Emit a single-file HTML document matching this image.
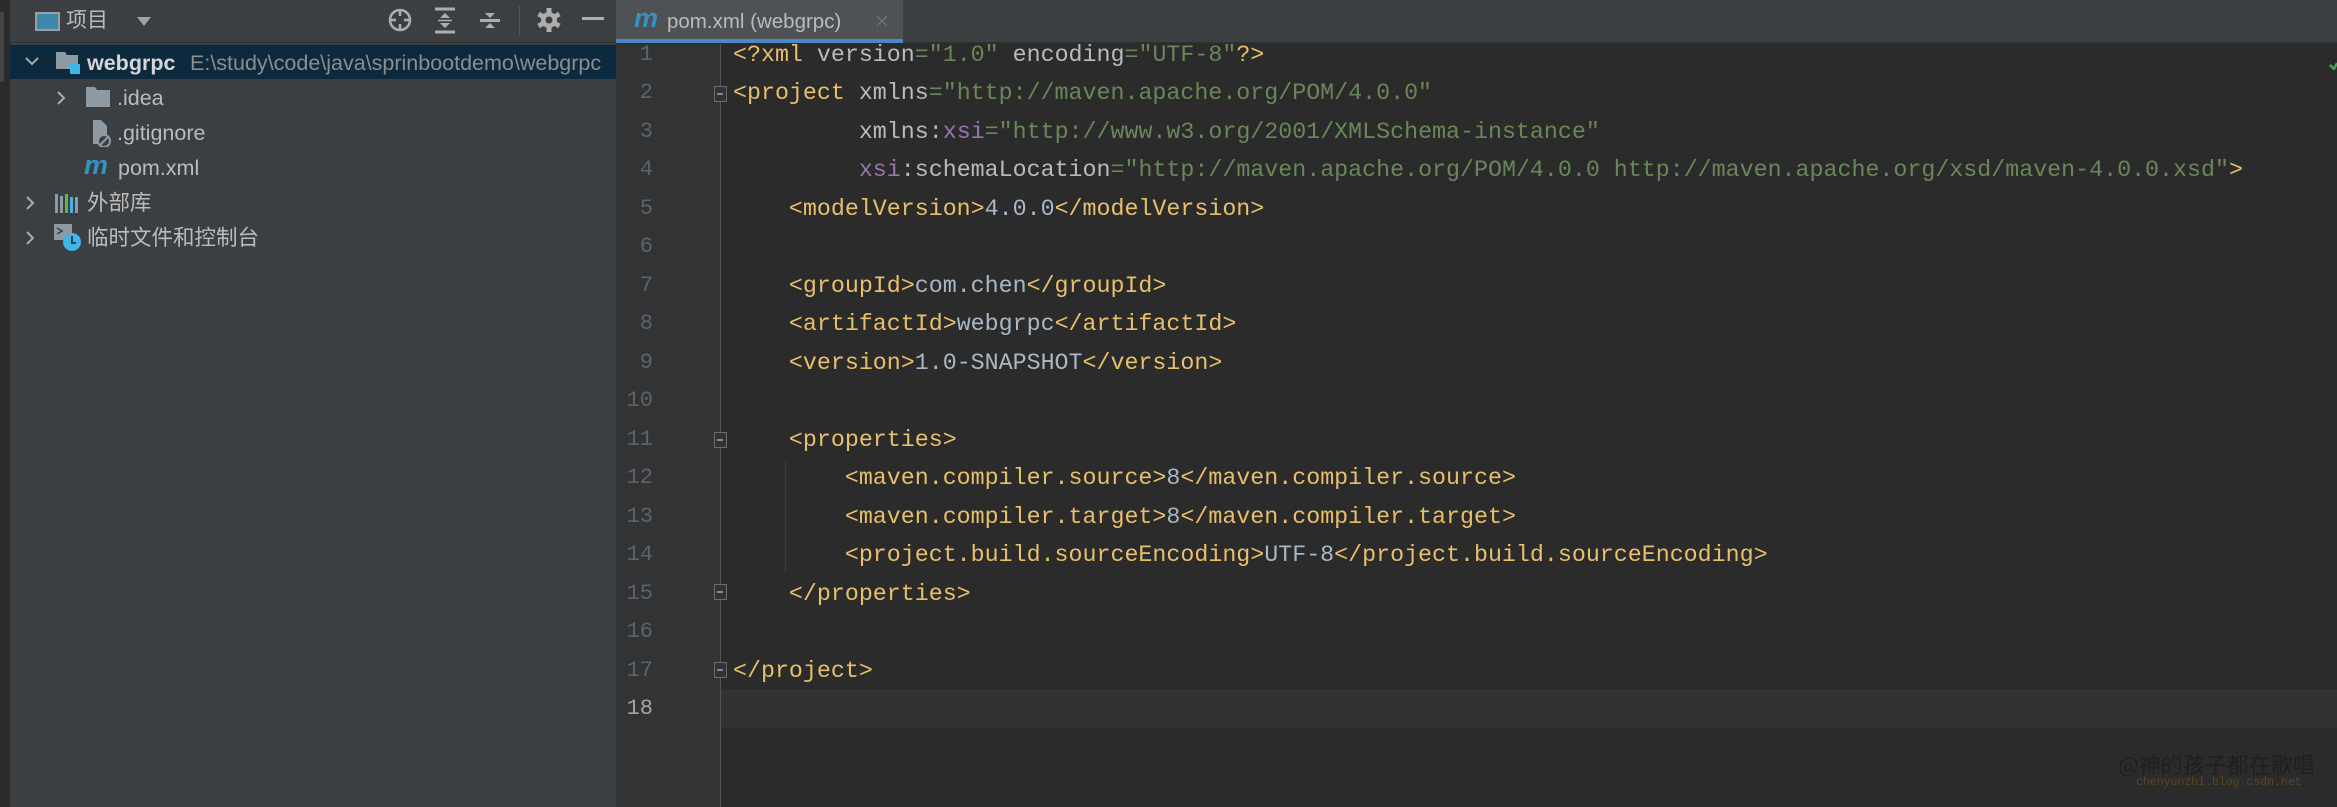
<!DOCTYPE html>
<html><head><meta charset="utf-8"><style>
*{margin:0;padding:0;box-sizing:border-box}
body{width:2337px;height:807px;overflow:hidden;background:#2b2b2b;position:relative;font-family:"Liberation Sans","Noto Sans CJK SC",sans-serif}
.abs{position:absolute}
#strip{left:0;top:0;width:10px;height:807px;background:#2b2b2b}
#panel{left:10px;top:0;width:606px;height:807px;background:#3c3f41}
#phead{left:10px;top:0;width:606px;height:43px;background:#3c3f41;border-bottom:1px solid #323232}
.t{position:absolute;color:#bbbbbb;font-size:21.5px;line-height:24px;white-space:nowrap}
#sel{left:10px;top:45px;width:606px;height:34px;background:#0d293e}
#tabbar{left:616px;top:0;width:1721px;height:43px;background:#3c3f41;border-bottom:1px solid #323232}
#tab{left:616px;top:0;width:287px;height:43px;background:#4e5254}
#tabline{left:616px;top:39px;width:287px;height:4px;background:#4a88c7}
#gutter{left:616px;top:44px;width:105px;height:763px;background:#313335}
#fold{left:720px;top:44px;width:1px;height:763px;background:#555555}
#cur{left:721px;top:689px;width:1616px;height:39px;background:#323232}
.ln{position:absolute;left:616px;width:37px;text-align:right;font-family:"Liberation Mono",monospace;font-size:22px;color:#606366;height:38.5px;line-height:38.5px}
.code{position:absolute;left:733px;font-family:"Liberation Mono",monospace;font-size:23.3px;color:#a9b7c6;white-space:pre;height:38.5px;line-height:38.5px}
.g{color:#e8bf6a}.a{color:#bababa}.s{color:#6a8759}.p{color:#9876aa}.v{color:#a9b7c6}
.fm{position:absolute;left:714px;width:13px;height:16px;border:1.5px solid #6b6b6b;background:#313335}
.fm:after{content:"";position:absolute;left:2px;top:6px;width:6px;height:1.5px;background:#8a8a8a}
</style></head><body>
<div id="strip" class="abs"></div>
<div class="abs" style="left:0;top:12px;width:4px;height:70px;background:#444"></div>
<div id="panel" class="abs"></div>
<div id="phead" class="abs"></div>
<div class="abs" style="left:35px;top:12px;width:25px;height:19px;border:2px solid #9aa0a4;background:#3d87a8"></div>
<div class="t" style="left:66px;top:9px;font-size:21px">项目</div>
<svg class="abs" style="left:136px;top:15px" width="16" height="12"><path d="M1 2h14l-7 9z" fill="#a0a0a0"/></svg>
<svg class="abs" style="left:386px;top:6px" width="28" height="28"><circle cx="14" cy="14" r="10" fill="none" stroke="#adadad" stroke-width="2.5"/><path d="M14 3v7M14 18v7M3 14h7M18 14h7" stroke="#adadad" stroke-width="2.5"/></svg>
<svg class="abs" style="left:433px;top:6px" width="24" height="28"><path d="M2 3h20M2 26h20" stroke="#adadad" stroke-width="3"/><path d="M12 7l-5 5h10zM12 22l-5-5h10z" fill="#adadad"/><path d="M5 14.5h14" stroke="#adadad" stroke-width="1.5"/></svg>
<svg class="abs" style="left:478px;top:6px" width="24" height="28"><path d="M2 14.5h20" stroke="#adadad" stroke-width="3"/><path d="M12 12l-5-5h10zM12 17l-5 5h10z" fill="#adadad"/></svg>
<div class="abs" style="left:519px;top:6px;width:1px;height:30px;background:#555"></div>
<svg class="abs" style="left:536px;top:7px" width="26" height="26"><g transform="translate(13 13)" fill="#adadad"><circle r="8"/><rect x="-2.5" y="-12" width="5" height="24"/><rect x="-2.5" y="-12" width="5" height="24" transform="rotate(60)"/><rect x="-2.5" y="-12" width="5" height="24" transform="rotate(120)"/><circle r="3.5" fill="#3c3f41"/></g></svg>
<div class="abs" style="left:582px;top:17px;width:22px;height:3px;background:#adadad"></div>

<div id="sel" class="abs"></div>
<svg class="abs" style="left:24px;top:54px" width="16" height="16"><path d="M2 4l6 6 6-6" fill="none" stroke="#aaa" stroke-width="2"/></svg>
<svg class="abs" style="left:55px;top:50px" width="26" height="26"><path d="M1 2h9l2 3h11v14H1z" fill="#8e9aa3"/><rect x="15" y="14" width="10" height="10" fill="#3fb5e8"/></svg>
<div class="t" style="left:87px;top:51px;font-weight:bold;color:#d6d6d6">webgrpc</div>
<div class="t" style="left:190px;top:51px;color:#8d8d8d;width:426px;overflow:hidden">E:\study\code\java\sprinbootdemo\webgrpc</div>

<svg class="abs" style="left:55px;top:90px" width="14" height="16"><path d="M3 2l6 6-6 6" fill="none" stroke="#aaa" stroke-width="2"/></svg>
<svg class="abs" style="left:85px;top:86px" width="26" height="22"><path d="M1 1h9l2 3h13v17H1z" fill="#8e9aa3"/></svg>
<div class="t" style="left:117px;top:86px">.idea</div>

<svg class="abs" style="left:88px;top:119px" width="24" height="28"><path d="M5 1h8l6 6v18H5z" fill="#8e9aa3"/><circle cx="16" cy="22" r="6" fill="#3c3f41" stroke="#8e9aa3" stroke-width="2"/><path d="M12 26l8-8" stroke="#8e9aa3" stroke-width="2"/></svg>
<div class="t" style="left:117px;top:121px">.gitignore</div>

<div class="t" style="left:84px;top:153px;font-style:italic;font-weight:bold;color:#3592c4;font-size:27px">m</div>
<div class="t" style="left:118px;top:156px">pom.xml</div>

<svg class="abs" style="left:24px;top:195px" width="14" height="16"><path d="M3 2l6 6-6 6" fill="none" stroke="#aaa" stroke-width="2"/></svg>
<svg class="abs" style="left:54px;top:192px" width="26" height="22"><rect x="1" y="2" width="3" height="19" fill="#8e9aa3"/><rect x="6" y="4" width="3" height="17" fill="#8e9aa3"/><rect x="11" y="2" width="3" height="19" fill="#62b543"/><rect x="16" y="5" width="3" height="16" fill="#3fb5e8"/><rect x="21" y="5" width="3" height="16" fill="#8e9aa3"/></svg>
<div class="t" style="left:87px;top:191px">外部库</div>

<svg class="abs" style="left:24px;top:230px" width="14" height="16"><path d="M3 2l6 6-6 6" fill="none" stroke="#aaa" stroke-width="2"/></svg>
<svg class="abs" style="left:53px;top:223px" width="30" height="30"><rect x="1" y="1" width="18" height="16" fill="#8e9aa3"/><path d="M4 5l5 3-5 3" fill="none" stroke="#3c3f41" stroke-width="1.5"/><circle cx="19" cy="19" r="9" fill="#3fb5e8"/><path d="M19 13v7h4" fill="none" stroke="#3c3f41" stroke-width="2"/></svg>
<div class="t" style="left:87px;top:226px">临时文件和控制台</div>

<div id="tabbar" class="abs"></div>
<div id="tab" class="abs"></div>
<div id="tabline" class="abs"></div>
<div class="t" style="left:634px;top:6px;font-style:italic;font-weight:bold;color:#3592c4;font-size:27px">m</div>
<div class="t" style="left:667px;top:10px;font-size:20.5px">pom.xml (webgrpc)</div>
<svg class="abs" style="left:875px;top:14px" width="14" height="14"><path d="M2 2l10 10M12 2L2 12" stroke="#6e6e6e" stroke-width="1.5"/></svg>

<div id="gutter" class="abs"></div>
<div id="cur" class="abs"></div>
<div id="fold" class="abs"></div>
<div class="abs" style="left:785px;top:460px;width:1px;height:113px;background:#3b3b3b"></div>

<div class="ln" style="top:35.8px">1</div>
<div class="ln" style="top:74.3px">2</div>
<div class="ln" style="top:112.8px">3</div>
<div class="ln" style="top:151.3px">4</div>
<div class="ln" style="top:189.8px">5</div>
<div class="ln" style="top:228.3px">6</div>
<div class="ln" style="top:266.8px">7</div>
<div class="ln" style="top:305.3px">8</div>
<div class="ln" style="top:343.8px">9</div>
<div class="ln" style="top:382.3px">10</div>
<div class="ln" style="top:420.8px">11</div>
<div class="ln" style="top:459.3px">12</div>
<div class="ln" style="top:497.8px">13</div>
<div class="ln" style="top:536.3px">14</div>
<div class="ln" style="top:574.8px">15</div>
<div class="ln" style="top:613.3px">16</div>
<div class="ln" style="top:651.8px">17</div>
<div class="ln" style="top:690.3px;color:#a4a3a3">18</div>

<div class="fm" style="top:86px"></div>
<div class="fm" style="top:432px"></div>
<div class="fm" style="top:584px"></div>
<div class="fm" style="top:662px"></div>

<div class="code" style="top:35.8px"><span class="g">&lt;?xml </span><span class="a">version</span><span class="s">="1.0" </span><span class="a">encoding</span><span class="s">="UTF-8"</span><span class="g">?&gt;</span></div>
<div class="code" style="top:74.3px"><span class="g">&lt;project </span><span class="a">xmlns</span><span class="s">="http://maven.apache.org/POM/4.0.0"</span></div>
<div class="code" style="top:112.8px">         <span class="a">xmlns:</span><span class="p">xsi</span><span class="s">="http://www.w3.org/2001/XMLSchema-instance"</span></div>
<div class="code" style="top:151.3px">         <span class="p">xsi</span><span class="a">:schemaLocation</span><span class="s">="http://maven.apache.org/POM/4.0.0 http://maven.apache.org/xsd/maven-4.0.0.xsd"</span><span class="g">&gt;</span></div>
<div class="code" style="top:189.8px">    <span class="g">&lt;modelVersion&gt;</span>4.0.0<span class="g">&lt;/modelVersion&gt;</span></div>
<div class="code" style="top:266.8px">    <span class="g">&lt;groupId&gt;</span>com.chen<span class="g">&lt;/groupId&gt;</span></div>
<div class="code" style="top:305.3px">    <span class="g">&lt;artifactId&gt;</span>webgrpc<span class="g">&lt;/artifactId&gt;</span></div>
<div class="code" style="top:343.8px">    <span class="g">&lt;version&gt;</span>1.0-SNAPSHOT<span class="g">&lt;/version&gt;</span></div>
<div class="code" style="top:420.8px">    <span class="g">&lt;properties&gt;</span></div>
<div class="code" style="top:459.3px">        <span class="g">&lt;maven.compiler.source&gt;</span>8<span class="g">&lt;/maven.compiler.source&gt;</span></div>
<div class="code" style="top:497.8px">        <span class="g">&lt;maven.compiler.target&gt;</span>8<span class="g">&lt;/maven.compiler.target&gt;</span></div>
<div class="code" style="top:536.3px">        <span class="g">&lt;project.build.sourceEncoding&gt;</span>UTF-8<span class="g">&lt;/project.build.sourceEncoding&gt;</span></div>
<div class="code" style="top:574.8px">    <span class="g">&lt;/properties&gt;</span></div>
<div class="code" style="top:651.8px"><span class="g">&lt;/project&gt;</span></div>

<svg class="abs" style="left:2329px;top:60px" width="8" height="10"><path d="M1 5l4 4 3-6" fill="none" stroke="#4aa35a" stroke-width="2.5"/></svg>
<div class="abs" style="left:2118px;top:750px;font-size:22px;color:#1f1f1f;font-family:'Noto Sans CJK SC',sans-serif;line-height:28px;white-space:nowrap">@神的孩子都在歌唱</div>
<div class="abs" style="left:2136px;top:776px;font-size:11.5px;color:#5a4526;font-family:'Liberation Mono',monospace;line-height:14px;white-space:nowrap">chenyunzhi.blog.csdn.net</div>
</body></html>
